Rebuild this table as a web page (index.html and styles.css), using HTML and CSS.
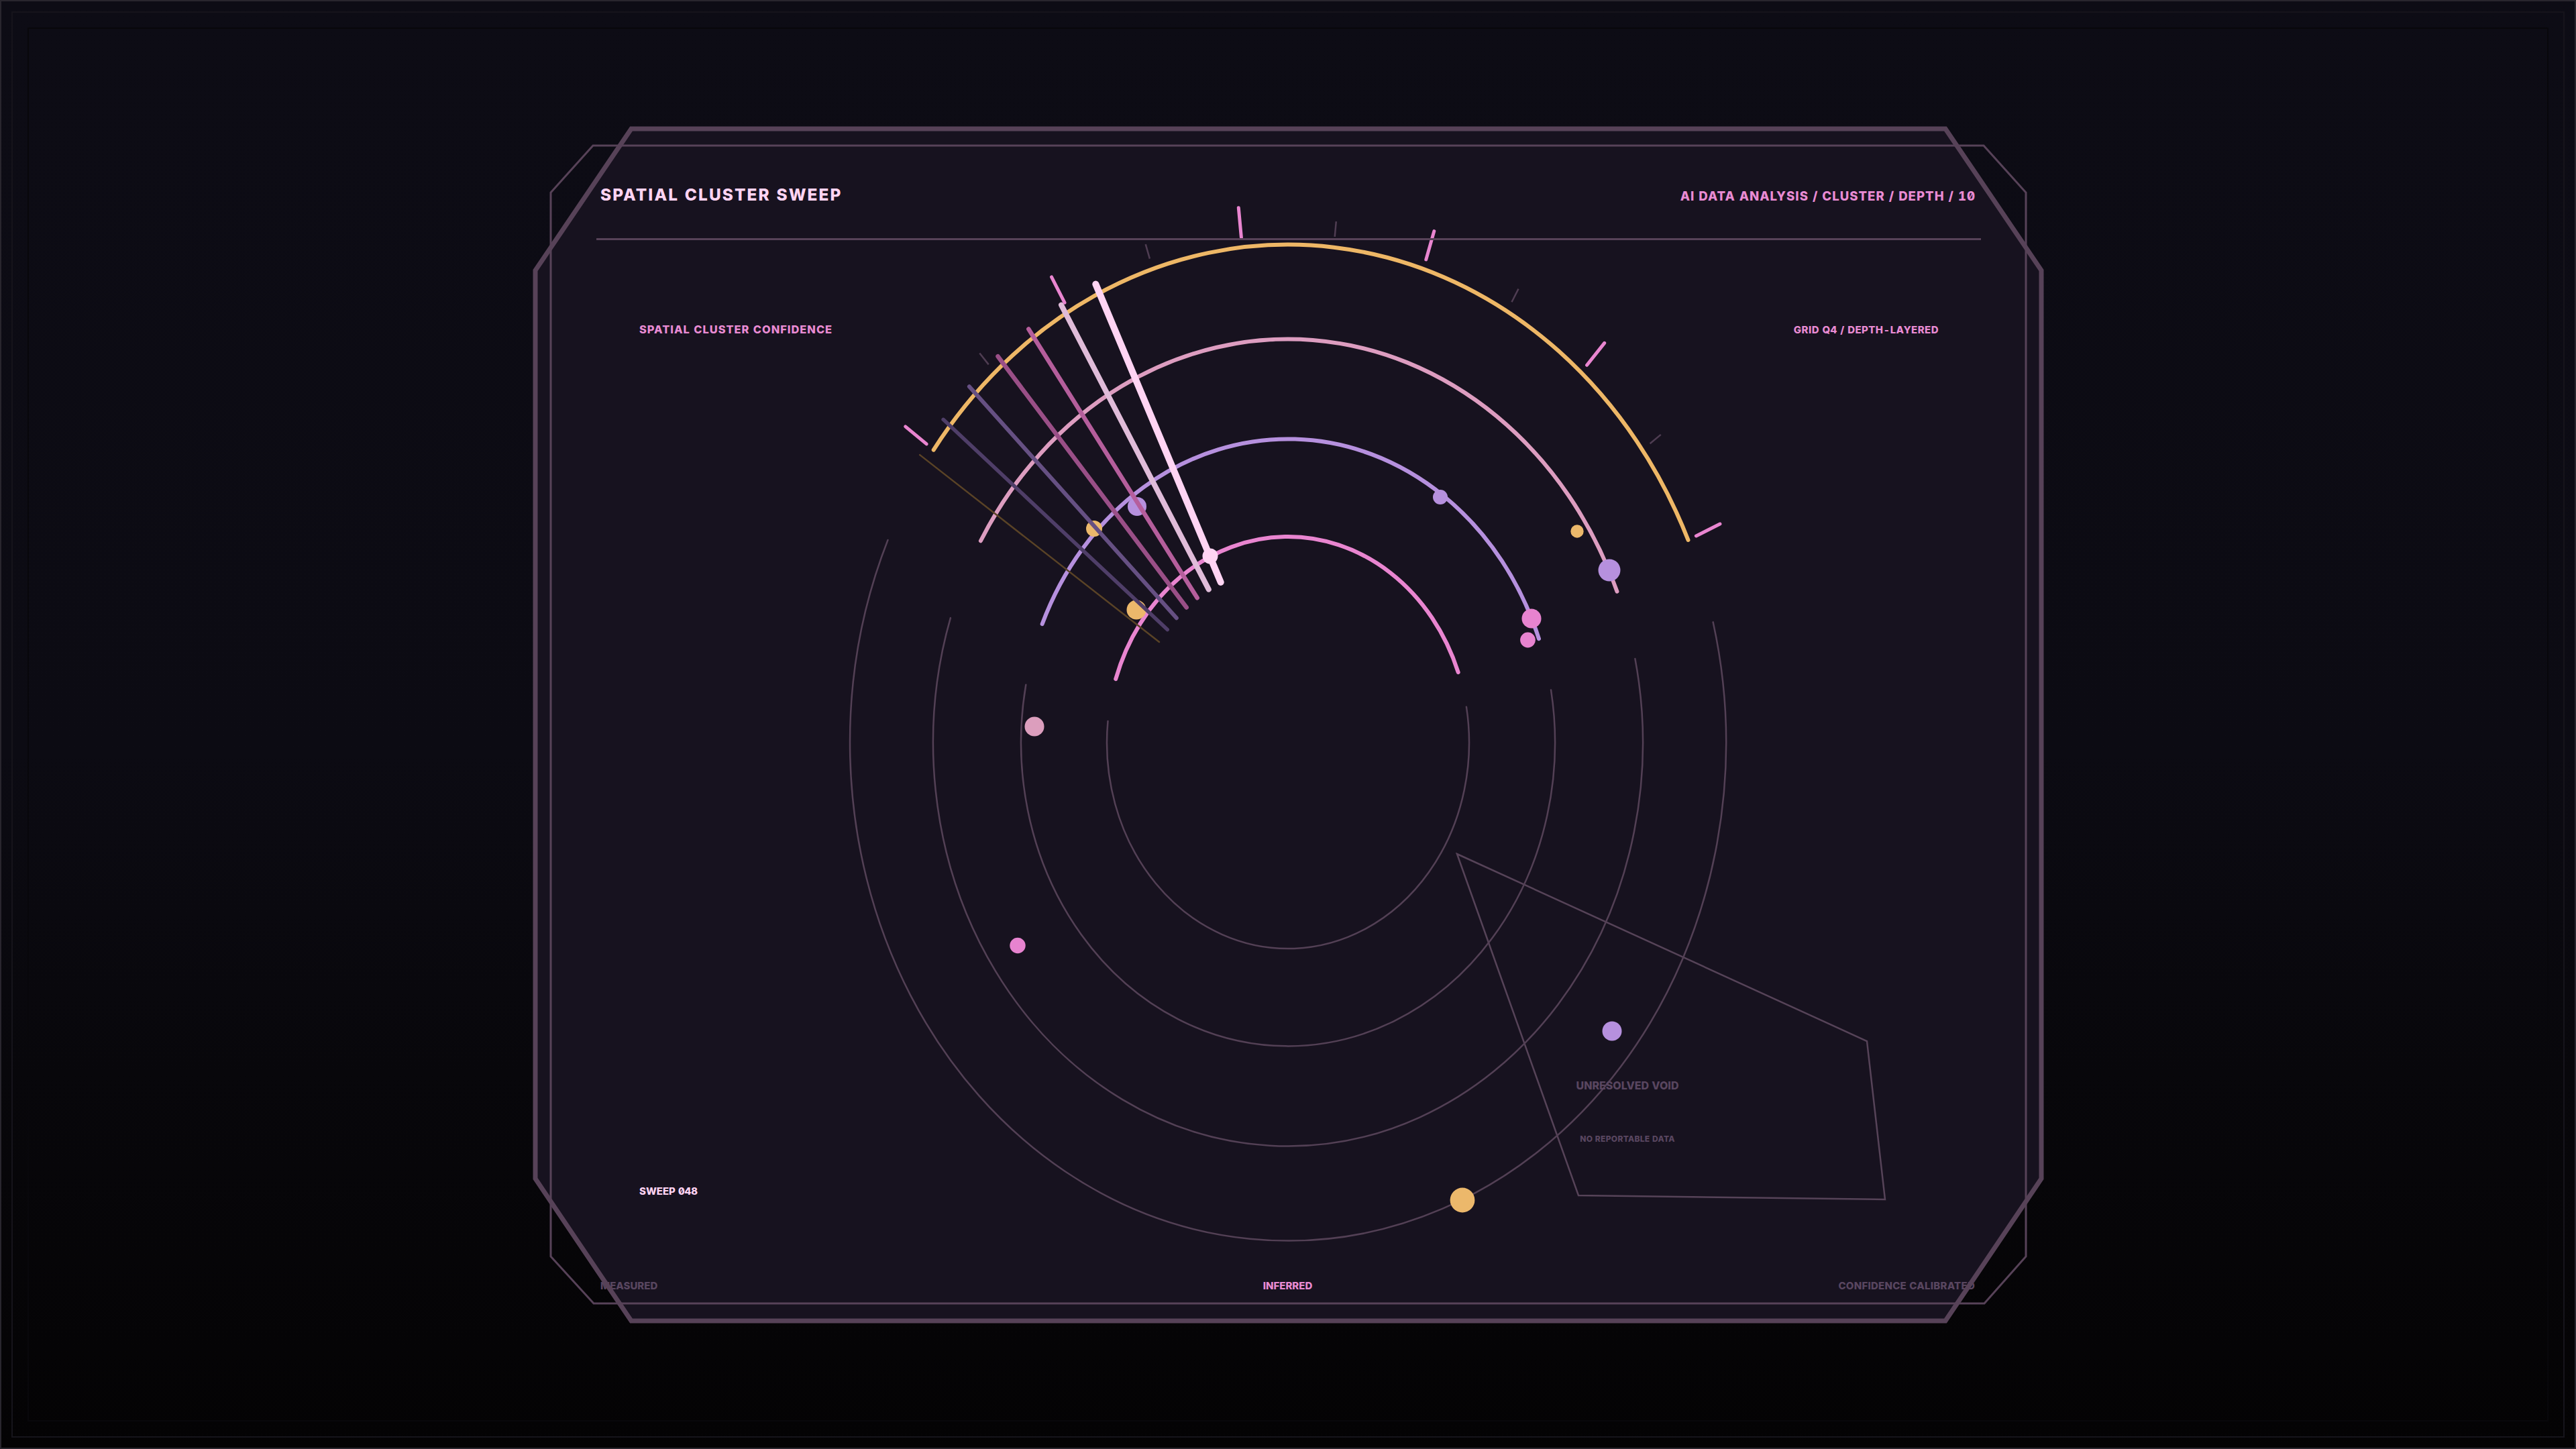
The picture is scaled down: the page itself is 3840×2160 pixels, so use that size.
FILE: index.html
```html
<!DOCTYPE html>
<html lang="en">
<head>
<meta charset="utf-8">
<title>Spatial Cluster Sweep</title>
<link rel="stylesheet" href="styles.css">
</head>
<body>
<div class="screen">
  <div class="frame-a">
    <div class="frame-b">
      <section class="panel">
        <svg class="panel-canvas" viewBox="797 191 2246 1778" width="2246" height="1778" aria-hidden="true">
          <polygon class="panel-fill" points="941,192 2900,192 3043,403 3043,1757 2900,1969 941,1969 798,1757 798,403"/>
          <polygon class="void" points="2172,1273 2783,1552 2810,1788 2353,1782"/>
          <g transform="translate(1920 1107) scale(1 1.137)">
            <g class="rings-grey">
              <path d="M -268.5 -28.2 A 270 270 0 1 0 265.9 -46.9"/>
              <path d="M -390.7 -75.9 A 398 398 0 1 0 392.0 -69.1"/>
              <path d="M -503.1 -163.5 A 529 529 0 1 0 517.4 -110.0"/>
              <path d="M -596.5 -265.6 A 653 653 0 1 0 633.6 -158.0"/>
            </g>
            <g class="rings-lit">
              <path class="c-pink" d="M 253.7 -92.3 A 270 270 0 0 0 -256.8 -83.4"/>
              <path class="c-lav" d="M 374.0 -136.1 A 398 398 0 0 0 -366.4 -155.5"/>
              <path class="c-rose" d="M 490.5 -198.2 A 529 529 0 0 0 -458.1 -264.5"/>
              <path class="c-gold" d="M 596.5 -265.6 A 653 653 0 0 0 -528.3 -383.8"/>
            </g>
          </g>
          <g class="dots">
            <circle cx="1695" cy="755" r="14" class="d-lav"/>
            <circle cx="1631" cy="788" r="12" class="d-gold"/>
            <circle cx="1694" cy="909" r="14.5" class="d-gold"/>
            <circle cx="1804" cy="829" r="11.5" class="d-blush"/>
            <circle cx="2147" cy="741" r="11" class="d-lav"/>
            <circle cx="2351" cy="792" r="9.7" class="d-gold"/>
            <circle cx="2399" cy="850" r="16.5" class="d-lav"/>
            <circle cx="2283" cy="922" r="14.5" class="d-pink"/>
            <circle cx="2277.5" cy="954" r="11.4" class="d-pink"/>
            <circle cx="1542" cy="1083" r="14.5" class="d-rose"/>
            <circle cx="1517" cy="1409.5" r="11.7" class="d-pink"/>
            <circle cx="2180" cy="1789" r="18.4" class="d-gold"/>
            <circle cx="2403" cy="1537" r="14.5" class="d-lav"/>
          </g>
          <g transform="translate(1920 1107) scale(1 1.137)">
            <g class="fan">
              <line class="f7" x1="-192.0" y1="-132.0" x2="-548.8" y2="-377.2"/>
              <line class="f6" x1="-179.8" y1="-148.2" x2="-513.9" y2="-423.6"/>
              <line class="f5" x1="-166.2" y1="-163.3" x2="-475.1" y2="-466.8"/>
              <line class="f4" x1="-151.3" y1="-177.2" x2="-432.5" y2="-506.4"/>
              <line class="f3" x1="-135.3" y1="-189.7" x2="-386.7" y2="-542.2"/>
              <line class="f2" x1="-118.2" y1="-200.8" x2="-338.0" y2="-573.8"/>
              <line class="f1" x1="-100.3" y1="-210.3" x2="-286.7" y2="-601.1"/>
            </g>
            <g class="ticks-major">
              <line x1="608.4" y1="-270.9" x2="644.0" y2="-286.7"/>
              <line x1="445.6" y1="-494.9" x2="471.7" y2="-523.9"/>
              <line x1="205.8" y1="-633.4" x2="217.8" y2="-670.5"/>
              <line x1="-69.6" y1="-662.3" x2="-73.7" y2="-701.1"/>
              <line x1="-333.0" y1="-576.8" x2="-352.5" y2="-610.5"/>
              <line x1="-538.8" y1="-391.5" x2="-570.3" y2="-414.4"/>
            </g>
            <g class="ticks-minor">
              <line x1="539.6" y1="-392.1" x2="555.8" y2="-403.8"/>
              <line x1="333.5" y1="-577.6" x2="343.5" y2="-594.9"/>
              <line x1="69.7" y1="-663.3" x2="71.8" y2="-683.2"/>
              <line x1="-206.1" y1="-634.4" x2="-212.3" y2="-653.4"/>
              <line x1="-446.3" y1="-495.7" x2="-459.7" y2="-510.5"/>
            </g>
          </g>
          <text class="void-title" x="2426" y="1624">UNRESOLVED VOID</text>
          <text class="void-note" x="2426" y="1702">NO REPORTABLE DATA</text>
        </svg>

        <header class="panel-head">
          <h1 class="title">SPATIAL CLUSTER SWEEP</h1>
          <div class="crumbs">AI DATA ANALYSIS / CLUSTER / DEPTH / 10</div>
        </header>

        <div class="panel-sub">
          <span class="sub-left">SPATIAL CLUSTER CONFIDENCE</span>
          <span class="sub-right">GRID Q4 / DEPTH-LAYERED</span>
        </div>

        <div class="sweep">SWEEP 048</div>

        <footer class="panel-foot">
          <span class="foot-l">MEASURED</span>
          <span class="foot-c">INFERRED</span>
          <span class="foot-r">CONFIDENCE CALIBRATED</span>
        </footer>

        <svg class="panel-frame" viewBox="797 191 2246 1778" width="2246" height="1778" aria-hidden="true">
          <polygon class="frame-inner" points="884,217 2957,217 3020,287 3020,1873 2958,1943 885,1943 821,1873 821,287"/>
          <polygon class="frame-outer" points="941,192 2900,192 3043,403 3043,1757 2900,1969 941,1969 798,1757 798,403"/>
        </svg>
      </section>
    </div>
  </div>
</div>
</body>
</html>
```

FILE: styles.css
```css
html, body {
  margin: 0;
  padding: 0;
  width: 3840px;
  height: 2160px;
  overflow: hidden;
  background: #0b0a11;
}

.screen {
  box-sizing: border-box;
  width: 3840px;
  height: 2160px;
  border: 2px solid #29262e;
  padding: 15px;
  background: linear-gradient(to bottom, #0d0c15 0%, #0c0b13 52%, #08070b 74%, #040304 100%);
}

.frame-a {
  box-sizing: border-box;
  height: 100%;
  border: 2px solid #16141b;
  padding: 22px;
}

.frame-b {
  box-sizing: border-box;
  height: 100%;
  border: 2px solid #08070b;
  display: flex;
  align-items: center;
  justify-content: center;
}

.panel {
  position: relative;
  box-sizing: border-box;
  width: 2246px;
  height: 1778px;
  flex: none;
  display: flex;
  flex-direction: column;
  padding-bottom: 45px;
  font-family: Inter, "DejaVu Sans", sans-serif;
  font-weight: 800;
  font-variant-numeric: tabular-nums slashed-zero;
  line-height: 1;
}

.panel > header,
.panel > div,
.panel > footer {
  position: relative;
  z-index: 1;
}

.panel-canvas,
.panel-frame {
  position: absolute;
  left: 0;
  top: 0;
  overflow: visible;
}

.panel-canvas { z-index: 0; }
.panel-frame { z-index: 2; pointer-events: none; }

.panel-fill { fill: #17121f; }

.frame-outer {
  fill: none;
  stroke: #574258;
  stroke-width: 7;
  stroke-linejoin: miter;
}

.frame-inner {
  fill: none;
  stroke: #574258;
  stroke-width: 3;
}

.void {
  fill: none;
  stroke: #564358;
  stroke-width: 2.5;
}

.rings-grey path {
  fill: none;
  stroke: #534055;
  stroke-width: 2.5;
  stroke-linecap: round;
  vector-effect: non-scaling-stroke;
}

.rings-lit path {
  fill: none;
  stroke-width: 6;
  stroke-linecap: round;
  vector-effect: non-scaling-stroke;
}

.c-pink { stroke: #e985d0; }
.c-lav { stroke: #b690de; }
.c-rose { stroke: #dd9dc0; }
.c-gold { stroke: #eeb766; }

.d-lav { fill: #b690de; }
.d-gold { fill: #ecb86b; }
.d-blush { fill: #ffd4f3; }
.d-pink { fill: #e783cf; }
.d-rose { fill: #dc9ebd; }

.fan line {
  stroke-linecap: round;
  vector-effect: non-scaling-stroke;
}

.f1 { stroke: #ffd4f3; stroke-width: 10; }
.f2 { stroke: #e0bcd9; stroke-width: 8; }
.f3 { stroke: #b55e9c; stroke-width: 6.5; }
.f4 { stroke: #9a4f87; stroke-width: 6.5; }
.f5 { stroke: #665083; stroke-width: 6; }
.f6 { stroke: #4f3e68; stroke-width: 5.5; }
.f7 { stroke: #5a4326; stroke-width: 2.5; stroke-linecap: butt; }

.ticks-major line {
  stroke: #e985d0;
  stroke-width: 5;
  stroke-linecap: round;
  vector-effect: non-scaling-stroke;
}

.ticks-minor line {
  stroke: #4f3d52;
  stroke-width: 2.5;
  vector-effect: non-scaling-stroke;
}

.void-title,
.void-note {
  font-family: Inter, "DejaVu Sans", sans-serif;
  font-weight: 800;
  fill: #594660;
  text-anchor: middle;
}

.void-title { font-size: 16px; }
.void-note { font-size: 12px; letter-spacing: 0.3px; }

.panel-head {
  display: flex;
  align-items: baseline;
  justify-content: space-between;
  margin: 0 90px 0 92px;
  padding: 87px 8px 52.5px 6px;
  border-bottom: 3px solid #574258;
}

.title {
  margin: 0;
  font-size: 24.4px;
  font-weight: 800;
  letter-spacing: 2.1px;
  color: #ffd4f3;
  line-height: 1;
}

.crumbs {
  font-size: 18.6px;
  letter-spacing: 1px;
  color: #e98bd3;
}

.panel-sub {
  display: flex;
  align-items: baseline;
  justify-content: space-between;
  margin: 125.5px 153px 0 156px;
  color: #e98bd3;
}

.sub-left { font-size: 16.4px; letter-spacing: 1px; }
.sub-right { font-size: 15px; letter-spacing: 0.45px; }

.sweep {
  margin: auto 0 0 156px;
  font-size: 15px;
  color: #ffd4f3;
}

.panel-foot {
  display: grid;
  grid-template-columns: 1fr auto 1fr;
  align-items: baseline;
  margin: 126px 99px 0 98px;
  font-size: 15px;
  color: #594660;
}

.foot-l { justify-self: start; }
.foot-c { justify-self: center; color: #e98bd3; }
.foot-r { justify-self: end; letter-spacing: 0.25px; }
```
